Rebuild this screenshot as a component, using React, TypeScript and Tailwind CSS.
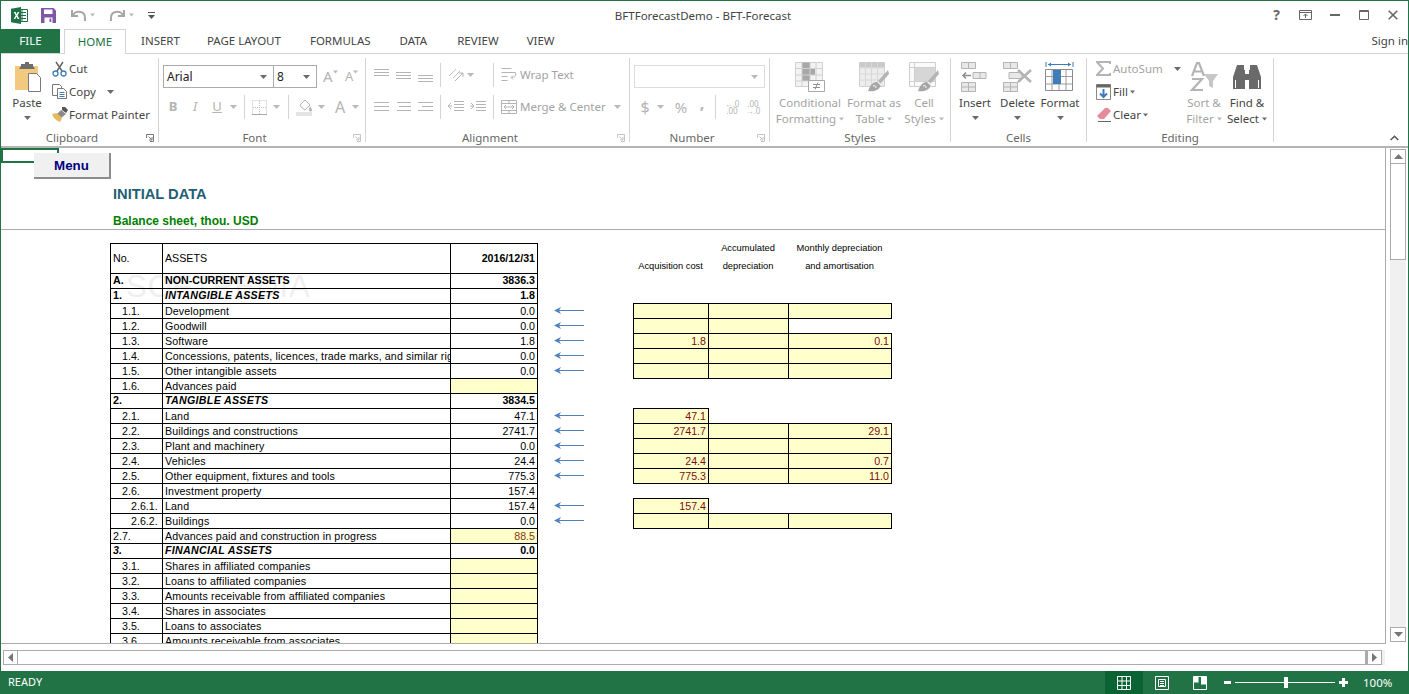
import type { ReactNode } from 'react';

type Row = {
  no: string;
  name: string;
  val?: string;
  kind?: 'sec' | 'sub';
  noPad?: string;
  italicNo?: boolean;
  yellow?: boolean;
  arrow?: boolean;
  cells?: (string | null)[];
};

const rows: Row[] = [
  { no: 'A.', name: 'NON-CURRENT ASSETS', val: '3836.3', kind: 'sec' },
  { no: '1.', name: 'INTANGIBLE ASSETS', val: '1.8', kind: 'sub' },
  { no: '1.1.', name: 'Development', val: '0.0', arrow: true, cells: ['', '', ''] },
  { no: '1.2.', name: 'Goodwill', val: '0.0', arrow: true, cells: ['', '', null] },
  { no: '1.3.', name: 'Software', val: '1.8', arrow: true, cells: ['1.8', '', '0.1'] },
  { no: '1.4.', name: 'Concessions, patents, licences, trade marks, and similar rights', val: '0.0', arrow: true, cells: ['', '', ''] },
  { no: '1.5.', name: 'Other intangible assets', val: '0.0', arrow: true, cells: ['', '', ''] },
  { no: '1.6.', name: 'Advances paid', yellow: true },
  { no: '2.', name: 'TANGIBLE ASSETS', val: '3834.5', kind: 'sub' },
  { no: '2.1.', name: 'Land', val: '47.1', arrow: true, cells: ['47.1', null, null] },
  { no: '2.2.', name: 'Buildings and constructions', val: '2741.7', arrow: true, cells: ['2741.7', '', '29.1'] },
  { no: '2.3.', name: 'Plant and machinery', val: '0.0', arrow: true, cells: ['', '', ''] },
  { no: '2.4.', name: 'Vehicles', val: '24.4', arrow: true, cells: ['24.4', '', '0.7'] },
  { no: '2.5.', name: 'Other equipment, fixtures and tools', val: '775.3', arrow: true, cells: ['775.3', '', '11.0'] },
  { no: '2.6.', name: 'Investment property', val: '157.4' },
  { no: '2.6.1.', name: 'Land', val: '157.4', noPad: 'pl-[20px]', arrow: true, cells: ['157.4', null, null] },
  { no: '2.6.2.', name: 'Buildings', val: '0.0', noPad: 'pl-[20px]', arrow: true, cells: ['', '', ''] },
  { no: '2.7.', name: 'Advances paid and construction in progress', val: '88.5', noPad: 'pl-[2px]', yellow: true },
  { no: '3.', name: 'FINANCIAL ASSETS', val: '0.0', kind: 'sub', italicNo: true },
  { no: '3.1.', name: 'Shares in affiliated companies', yellow: true },
  { no: '3.2.', name: 'Loans to affiliated companies', yellow: true },
  { no: '3.3.', name: 'Amounts receivable from affiliated companies', yellow: true },
  { no: '3.4.', name: 'Shares in associates', yellow: true },
  { no: '3.5.', name: 'Loans to associates', yellow: true },
  { no: '3.6.', name: 'Amounts receivable from associates', yellow: true },
];

const cellWidths = ['w-[76px]', 'w-[81px]', 'w-[104px]'];
const emptyWidths = ['w-[75px]', 'w-[80px]', 'w-[103px]'];

function Caret({ light, className = '' }: { light?: boolean; className?: string }) {
  return (
    <svg width="7" height="4" viewBox="0 0 7 4" className={className}>
      <path d="M0 0h7L3.500 4z" fill={light ? '#b9b9b9' : '#6a6a6a'} />
    </svg>
  );
}

function Sep() {
  return <div className="h-[24px] w-px bg-[#d4d4d4]" />;
}

function Launcher({ light }: { light?: boolean }) {
  const c = light ? '#c4c4c4' : '#777777';
  return (
    <svg width="8" height="8" viewBox="0 0 8 8" className="absolute bottom-[0px] right-[4px]">
      <path d="M.5 4V.5H7.500V7.500H4M2.500 2.500l3 3M6 3v3H3" fill="none" stroke={c} />
    </svg>
  );
}

function Group({ label, width, children, light, launcher }: { label: string; width: string; children: ReactNode; light?: boolean; launcher?: boolean }) {
  return (
    <div className={`relative flex h-[84px] shrink-0 flex-col border-r border-[#d4d4d4] ${width}`}>
      <div className="h-[73px] shrink-0">{children}</div>
      <div className={`text-center text-[11.500px] leading-[14px] text-[#666666] ${launcher ? 'pr-[15px]' : ''}`}>{label}</div>
      {launcher && <Launcher light={light} />}
    </div>
  );
}

function BigBtn({ width, icon, lines, light, caret }: { width: string; icon: ReactNode; lines: ReactNode[]; light?: boolean; caret?: boolean }) {
  return (
    <div className={`flex shrink-0 flex-col items-center pt-[4px] ${width}`}>
      <div className="flex h-[30px] items-center justify-center">{icon}</div>
      <div className={`mt-[3px] flex flex-col items-center whitespace-nowrap text-[11.500px] leading-[16px] ${light ? 'text-[#a3a3a3]' : 'text-[#444444]'}`}>
        {lines.map((l, i) => (
          <div key={i} className="flex items-center">{l}</div>
        ))}
        {caret && <Caret light={light} className="mt-[5px]" />}
      </div>
    </div>
  );
}

function SmallRow({ icon, children, light }: { icon: ReactNode; children: ReactNode; light?: boolean }) {
  return (
    <div className={`flex h-[23px] items-center whitespace-nowrap text-[11.500px] ${light ? 'text-[#a3a3a3]' : 'text-[#444444]'}`}>
      <div className="flex w-[19px] shrink-0 justify-center">{icon}</div>
      {children}
    </div>
  );
}

function Lines({ ys, xs = [] }: { ys: number[]; xs?: number[] }) {
  return (
    <svg width="15" height="14" viewBox="0 0 15 14">
      {ys.map((y, i) => (
        <path key={i} d={`M${xs[i] ?? 0} ${y}.5H15`} stroke="#b4b4b4" />
      ))}
    </svg>
  );
}

function ExcelLogo() {
  return (
    <svg width="17" height="17" viewBox="0 0 17 17">
      <path d="M6 2.500h10.500v12H6z" fill="#fff" stroke="#1e7145" />
      <path d="M10 5.500h5M10 8.500h5M10 11.500h5M11 2.500v12" stroke="#1e7145" />
      <path d="M0 1.800 10 0v17L0 15.200z" fill="#1e7145" />
      <path d="M2.800 5h1.800l1 2.300L6.800 5h1.600L6.500 8.500l2 3.500H6.700L5.500 9.700 4.300 12H2.700l2-3.500z" fill="#fff" />
    </svg>
  );
}

function SaveIcon() {
  return (
    <svg width="15" height="15" viewBox="0 0 15 15">
      <path d="M0 0h12.500L15 2.500V15H0z" fill="#7f57a8" />
      <path d="M3 1.500h8.500v4.500H3z" fill="#fff" />
      <path d="M3.500 9.500h8V15h-8z" fill="#fff" />
      <path d="M8.500 10.500h1.800V14H8.500z" fill="#7f57a8" />
    </svg>
  );
}

function TableIcon({ children }: { children?: ReactNode }) {
  return (
    <svg width="30" height="30" viewBox="0 0 30 30">
      {children}
    </svg>
  );
}

function ConditionalIcon() {
  return (
    <TableIcon>
      <path d="M.5 .5h27v24H.5z" fill="#f3f3f3" stroke="#d0d0d0" />
      <path d="M7 .5h8v6H7zM7 7h13v6H7zM7 13h8v6H7z" fill="#a8a8a8" />
      <path d="M7 .5v24M15 .5v24M21 .5v24M.5 6.500h27M.5 13h27M.5 19h27" stroke="#d0d0d0" />
      <path d="M13.500 18.500h16v11h-16z" fill="#fff" stroke="#a8a8a8" />
      <path d="M18 22.500h7M18 25.500h7M23 20.500l-3 7" stroke="#8f8f8f" fill="none" />
    </TableIcon>
  );
}

function BrushStroke() {
  return (
    <>
      <path d="M29 8 19 19l2.500 2.500L30 12z" fill="#b4b4b4" />
      <path d="M18 20c-4 0-7 3-9 9 5 1 12-1 12.500-5.500z" fill="#a6a6a6" />
      <path d="M14 24c2-1 3 0 3 2" fill="none" stroke="#fff" />
    </>
  );
}

function FormatTableIcon() {
  return (
    <TableIcon>
      <path d="M.5 .5h25v24H.5z" fill="#ececec" stroke="#d0d0d0" />
      <path d="M.5 .5h25v5H.5z" fill="#c9c9c9" />
      <path d="M6.500 .5v24M12.500 .5v24M18.500 .5v24M.5 6h25M.5 12h25M.5 18h25" stroke="#d8d8d8" />
      <BrushStroke />
    </TableIcon>
  );
}

function CellStylesIcon() {
  return (
    <TableIcon>
      <path d="M.5 .5h26v24H.5z" fill="#fafafa" stroke="#cfcfcf" />
      <path d="M.5 5.500h26M.5 19.500h26M5.500 .5v24" stroke="#cfcfcf" />
      <path d="M6 6h20v13H6z" fill="#d6d6d6" />
      <BrushStroke />
    </TableIcon>
  );
}

function InsertCellsIcon() {
  return (
    <TableIcon>
      <path d="M1.500 .5h14v6h-14zM8.500 .5v6M1.500 20.500h14v9h-14zM8.500 20.500v9M1.500 25h14M13 10.500h13v6H13zM20 10.500v6" fill="#e8e8e8" stroke="#b4b4b4" />
      <path d="M3 13.500h8M6 10.500l-3 3 3 3" fill="none" stroke="#8e8e8e" strokeWidth="1.500" />
    </TableIcon>
  );
}

function DeleteCellsIcon() {
  return (
    <TableIcon>
      <path d="M.5 .5h14v6H.5zM7.500 .5v6M.5 20.500h14v9H.5zM7.500 20.500v9M.5 25h14M6 10.500h13v6H6z" fill="#e8e8e8" stroke="#b4b4b4" />
      <path d="m15 8 13 12M28 8 15 20" fill="none" stroke="#b4b4b4" strokeWidth="2.500" />
    </TableIcon>
  );
}

function FormatCellsIcon() {
  return (
    <TableIcon>
      <path d="M1 0v5M28 0v5M3 2.500h23" fill="none" stroke="#3f7cb8" />
      <path d="M3 2.500 6 .5v4zM26 2.500l-3-2v4z" fill="#3f7cb8" />
      <path d="M.5 7.500h27v21H.5z" fill="#fff" stroke="#8a8a8a" />
      <path d="M7 7.500v21M14 7.500v21M21 7.500v21M.5 14.500h27M.5 22h27" stroke="#9c9c9c" />
      <path d="M8 8h8v14H8z" fill="#3f7cb8" />
    </TableIcon>
  );
}

function SortIcon() {
  return (
    <TableIcon>
      <path d="M15 12h14l-5 7v7l-4-2v-5z" fill="#c6c6c6" />
      <path d="M3 14 8 1h2l5 13M5 9.500h8" fill="none" stroke="#b4b4b4" strokeWidth="2.200" />
      <path d="M3 17h10L3 28h11" fill="none" stroke="#b4b4b4" strokeWidth="2.200" />
    </TableIcon>
  );
}

function BinocularIcon() {
  return (
    <TableIcon>
      <path d="M5 3h7v5h1v19H1V15zM25 3h-7v5h-1v19h12V15z" fill="#6a6a6a" />
      <path d="M12 12h6v6h-6z" fill="#6a6a6a" />
      <path d="M3.500 18v8M26.500 18v8" stroke="#fff" />
    </TableIcon>
  );
}

function Ribbon() {
  return (
    <div className="flex h-[94px] shrink-0 border-b-2 border-[#b4b4b4] pt-[4px]">
      <Group label="Clipboard" width="w-[158px]" launcher>
        <div className="flex">
          <div className="ml-[10px] w-[32px] shrink-0">
            <BigBtn
              width="w-[32px]"
              caret
              lines={['Paste']}
              icon={
                <svg width="29" height="30" viewBox="0 0 29 30">
                  <path d="M2 4h23v24H2z" fill="#f2c97e" />
                  <path d="M8 4V2h4V0h4v2h4v2l2 3H6z" fill="#6d6d6d" />
                  <path d="M15.500 11.500h8l4 4v14h-12z" fill="#fff" stroke="#7a7a7a" />
                </svg>
              }
            />
          </div>
          <div className="ml-[7px] -mt-[1px]">
            <SmallRow
              icon={
                <svg width="15" height="16" viewBox="0 0 15 16">
                  <path d="m4 1 6 9M11 1 5 10" stroke="#666666" strokeWidth="1.500" />
                  <circle cx="3.500" cy="12.500" r="2.500" fill="#fff" stroke="#3f7cb8" strokeWidth="1.300" />
                  <circle cx="11.500" cy="12.500" r="2.500" fill="#fff" stroke="#3f7cb8" strokeWidth="1.300" />
                </svg>
              }
            >
              <span>Cut</span>
            </SmallRow>
            <SmallRow
              icon={
                <svg width="15" height="15" viewBox="0 0 15 15">
                  <path d="M.5 .5h7l2 2v9H.5z" fill="#fff" stroke="#777777" />
                  <path d="M5.500 4.500h6l3 3v7h-9z" fill="#fff" stroke="#777777" />
                  <path d="M7.500 8.500h5M7.500 10.500h5M7.500 12.500h5" stroke="#3f7cb8" />
                </svg>
              }
            >
              <span>Copy</span>
              <Caret className="ml-[11px]" />
            </SmallRow>
            <SmallRow
              icon={
                <svg width="16" height="15" viewBox="0 0 16 15">
                  <path d="M10 0h3l3 3-2 3-4-3z" fill="#555555" />
                  <path d="m9 3 5 4-5 4-4-4z" fill="#8a8a8a" />
                  <path d="M5 6 0 7c2 5 5 7 8 8l2-4z" fill="#e7b95f" />
                </svg>
              }
            >
              <span>Format Painter</span>
            </SmallRow>
          </div>
        </div>
      </Group>

      <Group label="Font" width="w-[207px]" light launcher>
        <div className="flex pl-[4px] pt-[7px]">
          <div className="flex h-[23px] w-[111px] items-center justify-between border border-[#ababab] pl-[3px] pr-[6px] text-[12px] text-[#222222]">
            <span>Arial</span>
            <Caret />
          </div>
          <div className="-ml-px flex h-[23px] w-[44px] items-center justify-between border border-[#ababab] pl-[3px] pr-[6px] text-[12px] text-[#222222]">
            <span>8</span>
            <Caret />
          </div>
          <div className="ml-[6px] flex w-[20px] items-center text-[15px] text-[#b4b4b4]">
            <span>A</span>
            <Caret light className="-mt-[9px] w-[5px]" />
          </div>
          <div className="ml-[2px] flex w-[16px] items-center text-[13px] text-[#b4b4b4]">
            <span>A</span>
            <Caret light className="-mt-[9px] w-[5px]" />
          </div>
        </div>
        <div className="mt-[7px] flex h-[24px] items-center pl-[3px] text-[#b4b4b4]">
          <div className="flex w-[22px] justify-center text-[13px] font-bold">B</div>
          <div className="flex w-[22px] justify-center text-[13px] italic">I</div>
          <div className="flex w-[22px] justify-center text-[13px] underline">U</div>
          <Caret light className="ml-[2px]" />
          <div className="ml-[7px]"><Sep /></div>
          <svg width="15" height="15" viewBox="0 0 15 15" className="ml-[7px]">
            <path d="M.5 .5h14v14H.5z" fill="none" stroke="#c2c2c2" strokeDasharray="1 1" />
            <path d="M7.500 1v13M1 7.500h13" stroke="#c2c2c2" strokeDasharray="1 1" />
            <path d="M0 14.500h15" stroke="#a8a8a8" />
          </svg>
          <Caret light className="ml-[6px]" />
          <div className="ml-[8px]"><Sep /></div>
          <svg width="17" height="17" viewBox="0 0 17 17" className="ml-[7px]">
            <path d="M4 6 9 1l5 5-5 5-4-3z" fill="#fff" stroke="#b4b4b4" />
            <path d="M14 7c1 2 2 3 2 4a1 1 0 0 1-3 0c0-1 .5-2 1-4z" fill="#b4b4b4" />
            <path d="M0 13h16v4H0z" fill="#e3e3e3" />
          </svg>
          <Caret light className="ml-[5px]" />
          <div className="ml-[8px] w-[14px] text-center text-[16px] leading-none">A</div>
          <Caret light className="ml-[5px]" />
        </div>
      </Group>

      <Group label="Alignment" width="w-[264px]" light launcher>
        <div className="mt-[5px] flex h-[24px] items-center pl-[8px]">
          <div className="w-[22px]"><Lines ys={[1, 4, 7]} /></div>
          <div className="w-[22px]"><Lines ys={[4, 7, 10]} /></div>
          <div className="w-[22px]"><Lines ys={[7, 10, 13]} /></div>
          <Sep />
          <svg width="16" height="16" viewBox="0 0 16 16" className="ml-[7px]">
            <path d="m1 9 7-7M5 11l7-7" stroke="#c2c2c2" />
            <path d="m7 14 8-8M15 6v4M15 6h-4" fill="none" stroke="#b4b4b4" />
          </svg>
          <Caret light className="ml-[3px]" />
          <div className="ml-[19px]"><Sep /></div>
          <svg width="16" height="14" viewBox="0 0 16 14" className="ml-[7px]">
            <path d="M.5 .5h10M.5 4.500h14M.5 8.500h6M.5 12.500h6" stroke="#b4b4b4" />
            <path d="M14.500 4.500c1 4-1 5-4 5m1.500-2-2 2 2 2" fill="none" stroke="#b4b4b4" />
          </svg>
          <span className="ml-[3px] text-[11.500px] text-[#a3a3a3]">Wrap Text</span>
        </div>
        <div className="mt-[8px] flex h-[24px] items-center pl-[8px]">
          <div className="w-[22px]"><Lines ys={[2, 6, 10]} xs={[0, 0, 0]} /></div>
          <div className="w-[22px]"><Lines ys={[2, 6, 10]} xs={[1, 3, 1]} /></div>
          <div className="w-[22px]"><Lines ys={[2, 6, 10]} xs={[0, 4, 0]} /></div>
          <Sep />
          <svg width="16" height="12" viewBox="0 0 16 12" className="ml-[7px]">
            <path d="M6 .5h10M6 3.500h10M6 6.500h10M6 9.500h10M0 5h4M0 5l3-3M0 5l3 3" fill="none" stroke="#b4b4b4" />
          </svg>
          <svg width="16" height="12" viewBox="0 0 16 12" className="ml-[6px]">
            <path d="M6 .5h10M6 3.500h10M6 6.500h10M6 9.500h10M4 5H0M4 5 1 2M4 5 1 8" fill="none" stroke="#b4b4b4" />
          </svg>
          <div className="ml-[7px]"><Sep /></div>
          <svg width="16" height="14" viewBox="0 0 16 14" className="ml-[7px]">
            <path d="M.5 .5h15v13H.5zM.5 3.500h15M.5 10.500h15M8 .5v3M8 10.500v3M3 7h10M3 7l2-2M3 7l2 2M13 7l-2-2M13 7l-2 2" fill="none" stroke="#b4b4b4" />
          </svg>
          <span className="ml-[3px] text-[11.500px] text-[#a3a3a3]">Merge &amp; Center</span>
          <Caret light className="ml-[8px]" />
        </div>
      </Group>

      <Group label="Number" width="w-[140px]" light launcher>
        <div className="ml-[4px] mt-[7px] flex h-[23px] w-[131px] items-center justify-end border border-[#dcdcdc] pr-[6px]">
          <Caret light />
        </div>
        <div className="mt-[7px] flex h-[24px] items-center text-[#b4b4b4]">
          <div className="ml-[9px] w-[12px] text-center text-[16px]">$</div>
          <Caret light className="ml-[6px]" />
          <div className="ml-[6px] w-[22px] text-center text-[15px]">%</div>
          <div className="ml-[3px] -mt-[8px] w-[14px] text-center text-[16px] font-bold leading-[14px]">,</div>
          <div className="ml-[6px]"><Sep /></div>
          <div className="ml-[7px] w-[18px] text-center text-[8px] leading-[7px]">
            <div>←.0</div>
            <div>.00</div>
          </div>
          <div className="ml-[4px] w-[16px] text-center text-[8px] leading-[7px]">
            <div>.00</div>
            <div>→.0</div>
          </div>
        </div>
      </Group>

      <Group label="Styles" width="w-[181px]">
        <div className="flex pl-[6px]">
          <BigBtn width="w-[68px]" light icon={<ConditionalIcon />} lines={['Conditional', <>Formatting<Caret light className="ml-[3px] w-[5px]" /></>]} />
          <BigBtn width="w-[60px]" light icon={<FormatTableIcon />} lines={['Format as', <>Table<Caret light className="ml-[3px] w-[5px]" /></>]} />
          <BigBtn width="w-[40px]" light icon={<CellStylesIcon />} lines={['Cell', <>Styles<Caret light className="ml-[3px] w-[5px]" /></>]} />
        </div>
      </Group>

      <Group label="Cells" width="w-[136px]">
        <div className="flex pl-[3px]">
          <BigBtn width="w-[42px]" caret icon={<InsertCellsIcon />} lines={['Insert']} />
          <BigBtn width="w-[43px]" caret icon={<DeleteCellsIcon />} lines={['Delete']} />
          <BigBtn width="w-[42px]" caret icon={<FormatCellsIcon />} lines={['Format']} />
        </div>
      </Group>

      <Group label="Editing" width="w-[187px]">
        <div className="flex pl-[7px]">
          <div className="-mt-[1px] w-[89px] shrink-0">
            <SmallRow
              light
              icon={
                <svg width="15" height="15" viewBox="0 0 15 15">
                  <path d="M14 3V1H1l6 6.500L1 14h13v-2" fill="none" stroke="#b4b4b4" strokeWidth="2" />
                </svg>
              }
            >
              <span>AutoSum</span>
              <Caret className="ml-[11px]" />
            </SmallRow>
            <SmallRow
              icon={
                <svg width="15" height="16" viewBox="0 0 15 16">
                  <path d="M.5 .5h14v15H.5z" fill="#fff" stroke="#8a8a8a" />
                  <path d="M.5 .5h14v3H.5z" fill="#666666" />
                  <path d="M7.500 5v8M4 9.500l3.500 3.500L11 9.500" fill="none" stroke="#3f7cb8" strokeWidth="2" />
                </svg>
              }
            >
              <span>Fill</span>
              <Caret className="ml-[2px] w-[5px]" />
            </SmallRow>
            <SmallRow
              icon={
                <svg width="16" height="14" viewBox="0 0 16 14">
                  <path d="M9 0h3l3 3-7 8H4L1 8z" fill="#e58b9b" />
                  <path d="M2 13.500h13" stroke="#666666" />
                </svg>
              }
            >
              <span>Clear</span>
              <Caret className="ml-[2px] w-[5px]" />
            </SmallRow>
          </div>
          <BigBtn width="w-[42px]" light icon={<SortIcon />} lines={['Sort &', <>Filter<Caret light className="ml-[3px] w-[5px]" /></>]} />
          <BigBtn width="w-[44px]" icon={<BinocularIcon />} lines={['Find &', <>Select<Caret className="ml-[3px] w-[5px]" /></>]} />
        </div>
      </Group>

      <div className="flex h-[84px] flex-1 items-end justify-end pb-[1px] pr-[9px]">
        <svg width="9" height="6" viewBox="0 0 9 6">
          <path d="m.7 5 3.800-3.800L8.300 5" fill="none" stroke="#555555" strokeWidth="1.500" />
        </svg>
      </div>
    </div>
  );
}

function SheetRow({ r }: { r: Row }) {
  const base = '-mr-px flex h-[16px] shrink-0 items-center overflow-hidden whitespace-nowrap border border-black leading-none';
  const strong = r.kind ? 'font-bold pb-[2px]' : '';
  return (
    <div className="flex h-[15px] text-[10.670px] text-black">
      <div className={`${base} w-[53px] ${r.noPad ?? (r.kind ? 'pl-[2px]' : 'pl-[11px]')} ${strong} ${r.italicNo ? 'italic' : ''}`}>{r.no}</div>
      <div className={`${base} w-[289px] pl-[2px] ${strong} ${r.kind === 'sub' ? 'italic tracking-[0.3px]' : ''} ${r.kind ? '' : 'tracking-[0.12px]'}`}>{r.name}</div>
      <div className={`${base} w-[88px] justify-end pr-[2px] ${strong} ${r.yellow ? 'bg-[#ffffcc] text-[#833c0b]' : ''}`}>{r.val}</div>
      <div className="ml-[17px] flex w-[30px] shrink-0 items-center">
        {r.arrow && (
          <svg width="30" height="9" viewBox="0 0 30 9">
            <path d="M4 4.500h26" stroke="#4f81bd" />
            <path d="M0 4.500 7 1 5 4.500 7 8z" fill="#4f81bd" />
          </svg>
        )}
      </div>
      <div className="ml-[49px] flex">
        {r.cells?.map((c, i) =>
          c === null ? (
            <div key={i} className={`shrink-0 ${emptyWidths[i]}`} />
          ) : (
            <div key={i} className={`${base} ${cellWidths[i]} justify-end bg-[#ffffcc] pr-[2px] text-[#7a0c0c]`}>{c}</div>
          ),
        )}
      </div>
    </div>
  );
}

function Sheet() {
  return (
    <div className="relative flex h-[496px] shrink-0">
      <div className="relative w-[1385px] shrink-0 overflow-hidden border-b border-r border-[#ababab] font-['Liberation_Sans',Arial,sans-serif]">
        <div className="absolute left-0 top-0 h-[15px] w-[58px] border-2 border-[#217346]" />
        <div className="absolute left-[33px] top-[5px] flex h-[26px] w-[77px] items-center justify-center border-b-2 border-r-2 border-[#8c8c8c] bg-[#f0f0f0] pt-[1px] text-[13.330px] font-bold text-[#000080]">
          Menu
        </div>
        <div className="h-[82px] border-b border-[#ababab] pl-[112px] pt-[37px]">
          <div className="text-[14.670px] font-bold leading-[18px] text-[#215e76]">INITIAL DATA</div>
          <div className="mt-[11px] text-[12px] font-bold leading-[14px] text-[#008000]">Balance sheet, thou. USD</div>
        </div>
        <div className="pointer-events-none absolute left-[125px] top-[123px] text-[31px] leading-none tracking-[1px] text-[#efefef]">
          SOFTPEDIA
        </div>
        <div className="relative pl-[109px] pt-[13px]">
          <div className="flex h-[30px] text-[10.670px] text-black">
            <div className="-mr-px flex h-[31px] w-[53px] shrink-0 items-center border border-black pb-[2px] pl-[2px]">No.</div>
            <div className="-mr-px flex h-[31px] w-[289px] shrink-0 items-center border border-black pb-[2px] pl-[2px]">ASSETS</div>
            <div className="-mr-px flex h-[31px] w-[88px] shrink-0 items-center justify-end border border-black pb-[2px] pr-[2px] font-bold">2016/12/31</div>
            <div className="ml-[96px] flex -mt-[4px] text-center text-[9.300px] leading-[18px]">
              <div className="w-[75px] pt-[18px]">Acquisition cost</div>
              <div className="w-[80px]">
                <div>Accumulated</div>
                <div>depreciation</div>
              </div>
              <div className="w-[103px]">
                <div>Monthly depreciation</div>
                <div>and amortisation</div>
              </div>
            </div>
          </div>
          {rows.map((r) => (
            <SheetRow key={r.no} r={r} />
          ))}
        </div>
      </div>
      <div className="ml-[4px] flex w-[16px] flex-col pb-[2px] pt-[1px]">
        <div className="flex h-[15px] shrink-0 items-center justify-center border border-[#ababab] bg-white">
          <svg width="9" height="5" viewBox="0 0 9 5"><path d="M4.500 0 9 5H0z" fill="#777777" /></svg>
        </div>
        <div className="h-[97px] shrink-0 -mt-px border border-[#ababab] bg-white" />
        <div className="flex-1 bg-[#f0f0f0]" />
        <div className="flex h-[15px] shrink-0 items-center justify-center border border-[#ababab] bg-white">
          <svg width="9" height="5" viewBox="0 0 9 5"><path d="M0 0h9L4.500 5z" fill="#777777" /></svg>
        </div>
      </div>
    </div>
  );
}

function HScroll() {
  return (
    <div className="flex h-[27px] shrink-0 pl-[2px] pt-[6px]">
      <div className="flex h-[15px] w-[1382px] items-center bg-[#f0f0f0]">
        <div className="flex h-[15px] w-[15px] items-center justify-center border border-[#ababab] bg-white">
          <svg width="5" height="9" viewBox="0 0 5 9"><path d="M5 0v9L0 4.500z" fill="#777777" /></svg>
        </div>
        <div className="-ml-px h-[15px] w-[1350px] border border-r-2 border-[#ababab] bg-white" />
        <div className="flex h-[15px] w-[15px] items-center justify-center border border-[#ababab] bg-white">
          <svg width="5" height="9" viewBox="0 0 5 9"><path d="M0 0v9l5-4.500z" fill="#777777" /></svg>
        </div>
      </div>
    </div>
  );
}

function StatusBar() {
  return (
    <div className="flex h-[23px] shrink-0 items-center bg-[#217346] pl-[7px] text-[11px] text-white">
      <span>READY</span>
      <div className="ml-auto flex h-[23px] items-center pr-[17px]">
        <div className="flex h-[23px] w-[38px] items-center justify-center bg-[#0a6332]">
          <svg width="14" height="14" viewBox="0 0 14 14">
            <path d="M.5 .5h13v13H.5zM5 .5v13M9.500 .5v13M.5 5h13M.5 9.500h13" fill="none" stroke="#fff" />
          </svg>
        </div>
        <svg width="14" height="14" viewBox="0 0 14 14" className="ml-[12px]">
          <path d="M.5 .5h13v13H.5zM3.500 3.500h7v7h-7zM5 5.500h4M5 7.500h4M5 9.500h4" fill="none" stroke="#fff" />
        </svg>
        <svg width="14" height="14" viewBox="0 0 14 14" className="ml-[24px]">
          <path d="M.5 .5h13v13H.5z" fill="none" stroke="#fff" />
          <path d="M.5 .5h5v6h-5zM8 .5h5.500v8H8z" fill="#fff" />
        </svg>
        <svg width="7" height="3" viewBox="0 0 7 3" className="ml-[17px]">
          <path d="M0 0h7v3H0z" fill="#fff" />
        </svg>
        <div className="relative ml-[4px] h-px w-[100px] bg-white">
          <div className="absolute left-[49px] top-[-5px] h-[11px] w-[4px] bg-white" />
        </div>
        <svg width="9" height="9" viewBox="0 0 9 9" className="ml-[4px]">
          <path d="M3 0h3v3h3v3H6v3H3V6H0V3h3z" fill="#fff" />
        </svg>
        <span className="ml-[15px] w-[28px] text-[11.500px]">100%</span>
      </div>
    </div>
  );
}

export default function App() {
  return (
    <div className="flex h-[694px] w-[1409px] flex-col overflow-hidden border-x border-t border-[#217346] bg-white font-['Noto_Sans',sans-serif]">
      <div className="relative flex h-[28px] shrink-0 items-center">
        <div className="ml-[10px]"><ExcelLogo /></div>
        <div className="ml-[13px]"><SaveIcon /></div>
        <svg width="15" height="13" viewBox="0 0 15 13" className="ml-[15px]">
          <path d="M2 7c1-6 12-6 12 2v3M1 1v6h6" fill="none" stroke="#a6a6a6" strokeWidth="2" />
        </svg>
        <Caret light className="ml-[4px] w-[5px]" />
        <svg width="15" height="13" viewBox="0 0 15 13" className="ml-[15px]">
          <path d="M13 7C12 1 1 1 1 9v3M14 1v6H8" fill="none" stroke="#a6a6a6" strokeWidth="2" />
        </svg>
        <Caret light className="ml-[4px] w-[5px]" />
        <svg width="7" height="7" viewBox="0 0 7 7" className="ml-[14px]">
          <path d="M0 3h7L3.500 7z" fill="#555555" />
          <path d="M0 .5h7" stroke="#555555" />
        </svg>
        <div className="absolute inset-x-0 top-[7px] pr-[3px] text-center text-[11.500px] leading-[16px] text-[#444444]">BFTForecastDemo - BFT-Forecast</div>
        <div className="ml-auto flex items-center pr-[10px] text-[#666666]">
          <span className="mr-[19px] text-[14px] font-bold leading-none">?</span>
          <svg width="13" height="10" viewBox="0 0 13 10" className="mr-[18px]">
            <path d="M.5 .5h12v9H.5zM.5 2.500h12M6.500 8V4M4.500 6l2-2 2 2" fill="none" stroke="#666666" />
          </svg>
          <svg width="10" height="2" viewBox="0 0 10 2" className="mr-[19px]"><path d="M0 0h10v2H0z" fill="#666666" /></svg>
          <svg width="10" height="10" viewBox="0 0 10 10" className="mr-[19px]">
            <path d="M.5 .5h9v9h-9zM.5 1.500h9" fill="none" stroke="#666666" />
          </svg>
          <svg width="10" height="10" viewBox="0 0 10 10">
            <path d="m.7 .7 8.600 8.600M9.300 .7.7 9.300" fill="none" stroke="#666666" strokeWidth="1.600" />
          </svg>
        </div>
      </div>

      <div className="relative flex h-[25px] shrink-0 items-stretch border-b border-[#d4d4d4] text-[11.500px] text-[#444444]">
        <div className="flex w-[59px] items-center justify-center bg-[#217346] text-white">FILE</div>
        <div className="ml-[4px] flex h-[25px] w-[62px] items-center justify-center border-x border-t border-[#d4d4d4] bg-white text-[#217346]">HOME</div>
        <div className="ml-[15px] flex items-center">INSERT</div>
        <div className="ml-[27px] flex items-center">PAGE LAYOUT</div>
        <div className="ml-[29px] flex items-center">FORMULAS</div>
        <div className="ml-[29px] flex items-center">DATA</div>
        <div className="ml-[30px] flex items-center">REVIEW</div>
        <div className="ml-[28px] flex items-center">VIEW</div>
        <div className="ml-auto flex items-center">Sign in</div>
      </div>

      <Ribbon />
      <Sheet />
      <HScroll />
      <StatusBar />
    </div>
  );
}
